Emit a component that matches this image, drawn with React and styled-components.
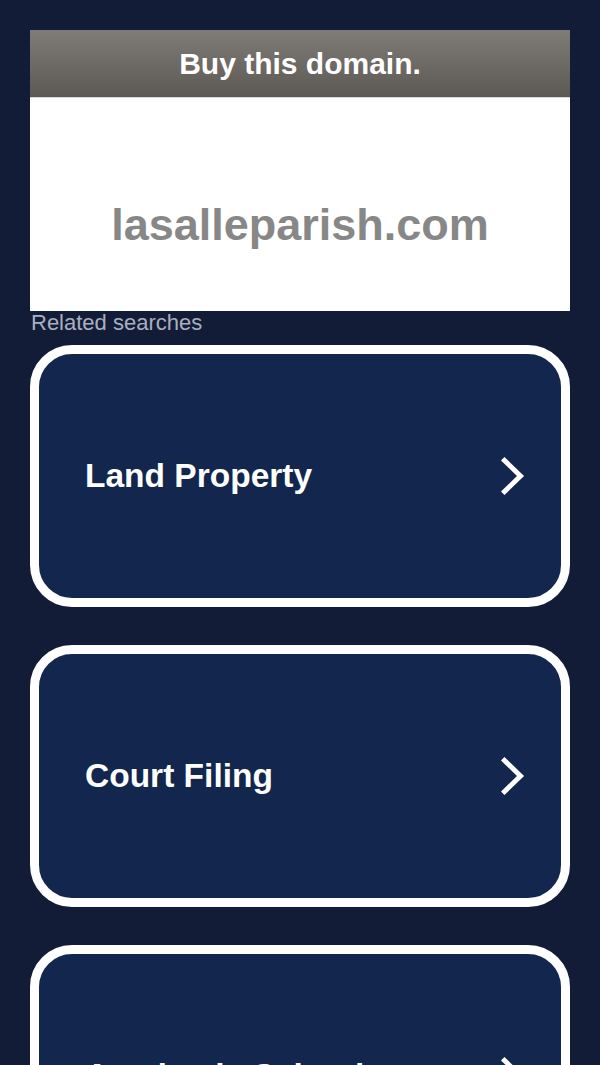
import styled, { createGlobalStyle } from "styled-components";

const GlobalStyle = createGlobalStyle`
  html, body {
    margin: 0;
    padding: 0;
    background: #121c37;
  }
  body {
    font-family: "Liberation Sans", Arial, sans-serif;
  }
`;

const Page = styled.div`
  padding: 30px 30px 0;
  min-height: 1065px;
  box-sizing: border-box;
`;

const Banner = styled.div`
  display: flex;
  flex-direction: column;
`;

const BuyBar = styled.div`
  height: 67px;
  display: flex;
  align-items: center;
  justify-content: center;
  background: linear-gradient(to bottom, #7f7b77 0%, #6e6a66 50%, #5c5854 100%);
  border-bottom: 1px solid #d9d9d9;
  color: #ffffff;
  font-size: 30px;
  font-weight: 700;
`;

const DomainBox = styled.div`
  height: 213px;
  box-sizing: border-box;
  padding-top: 101px;
  background: #ffffff;
  text-align: center;
  color: #878787;
  font-size: 45px;
  line-height: 52px;
  font-weight: 700;
`;

const RelatedTitle = styled.div`
  margin: 0 0 11px 1px;
  color: #a9afc0;
  font-size: 22px;
  line-height: 23px;
`;

const List = styled.div`
  display: flex;
  flex-direction: column;
  gap: 38px;
`;

const Card = styled.a`
  display: flex;
  align-items: center;
  justify-content: space-between;
  height: 262px;
  box-sizing: border-box;
  padding: 0 36px 0 46px;
  border: 9px solid #ffffff;
  border-radius: 42px;
  background: #12264e;
  color: #ffffff;
  text-decoration: none;
  cursor: pointer;
`;

const Label = styled.span`
  font-size: 33.5px;
  font-weight: 700;
  line-height: 40px;
`;

const Chevron = () => (
  <svg width="24" height="38" viewBox="0 0 24 38" fill="none">
    <path
      d="M3.5 3.5 L19.5 19 L3.5 34.5"
      stroke="#ffffff"
      strokeWidth="5"
      strokeLinecap="square"
      strokeLinejoin="miter"
    />
  </svg>
);

const searches = ["Land Property", "Court Filing", "Academic Schools"];

const App = () => {
  return (
    <>
      <GlobalStyle />
      <Page>
        <Banner>
          <BuyBar>Buy this domain.</BuyBar>
          <DomainBox>lasalleparish.com</DomainBox>
        </Banner>
        <RelatedTitle>Related searches</RelatedTitle>
        <List>
          {searches.map((s) => (
            <Card key={s}>
              <Label>{s}</Label>
              <Chevron />
            </Card>
          ))}
        </List>
      </Page>
    </>
  );
};

export default App;
